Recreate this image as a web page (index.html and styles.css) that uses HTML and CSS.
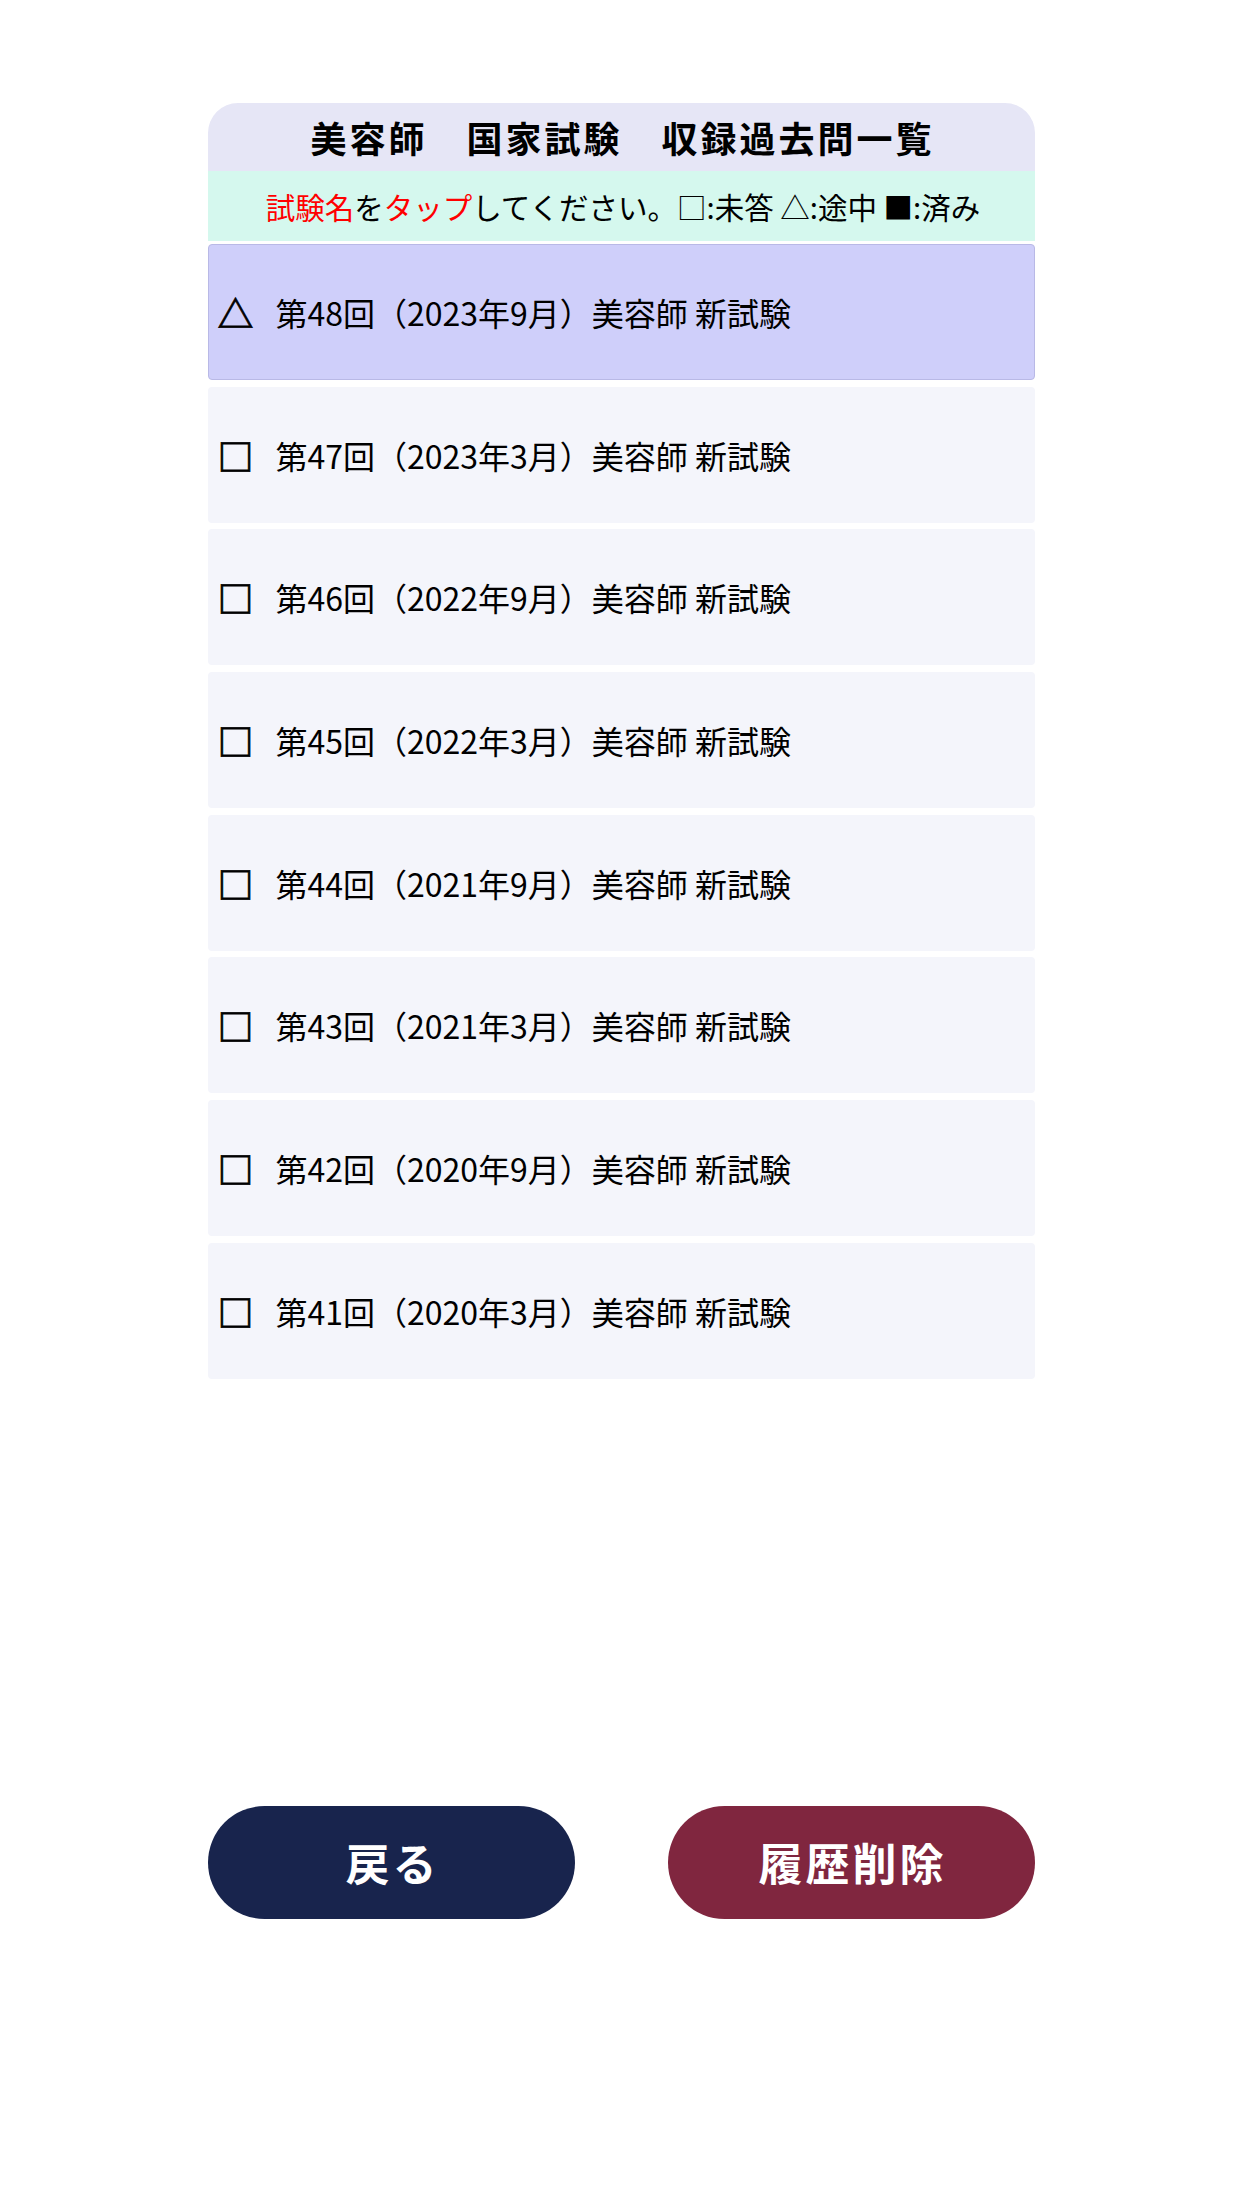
FILE: index.html
```html
<!DOCTYPE html>
<html lang="ja">

<head>
    <meta charset="utf-8">
    <meta name="viewport" content="width=device-width, initial-scale=1.0">
    <title>美容師 国家試験 収録過去問一覧</title>
    <link rel="stylesheet" href="styles.css">
</head>

<body>

    <div id="wrap">
        <h1 class="title">美容師　国家試験　収録過去問一覧</h1>
        <p class="hint"><span class="red">試験名</span>を<span class="red">タップ</span>してください。□:未答 △:途中 ■:済み</p>

        <ul class="exams">
            <li class="exam current"><span class="mark">△</span>第48回（2023年9月）美容師 新試験</li>
            <li class="exam"><span class="mark">□</span>第47回（2023年3月）美容師 新試験</li>
            <li class="exam"><span class="mark">□</span>第46回（2022年9月）美容師 新試験</li>
            <li class="exam"><span class="mark">□</span>第45回（2022年3月）美容師 新試験</li>
            <li class="exam"><span class="mark">□</span>第44回（2021年9月）美容師 新試験</li>
            <li class="exam"><span class="mark">□</span>第43回（2021年3月）美容師 新試験</li>
            <li class="exam"><span class="mark">□</span>第42回（2020年9月）美容師 新試験</li>
            <li class="exam"><span class="mark">□</span>第41回（2020年3月）美容師 新試験</li>
        </ul>

        <div class="buttons">
            <button class="btn back">戻る</button>
            <button class="btn reset">履歴削除</button>
        </div>
    </div>

</body>

</html>
```

FILE: styles.css
```css
body {
    margin: 0;
    background: #fff;
    font-family: "Noto Sans CJK JP", "Noto Sans", sans-serif;
    color: #000;
}

#wrap {
    width: 827px;
    margin: 103px auto 0;
}

.title {
    margin: 0;
    height: 68px;
    line-height: 68px;
    background: #e6e6f6;
    border-radius: 30px 30px 0 0;
    text-align: center;
    font-size: 36px;
    font-weight: bold;
    letter-spacing: 3px;
    text-indent: 3px;
}

.hint {
    margin: 0;
    height: 70px;
    line-height: 70px;
    background: #d5f8ee;
    text-align: center;
    font-size: 29.5px;
    text-indent: 4px;
}

.red {
    color: #ff0000;
}

.exams {
    list-style: none;
    margin: 3px 0 0;
    padding: 0;
    display: flex;
    flex-direction: column;
    gap: 6.7px;
}

.exam {
    height: 136px;
    display: flex;
    align-items: center;
    padding-left: 10px;
    background: #f4f5fb;
    border-radius: 4px;
    font-size: 32px;
    box-sizing: border-box;
}

.exam.current {
    background: #cfcffa;
    border: 1px solid #b9b9e6;
    padding-left: 9px;
}

.mark {
    width: 58px;
    font-size: 36px;
    font-weight: bold;
    -webkit-text-stroke: 0.8px #000;
}

.buttons {
    margin-top: 427px;
    display: flex;
    justify-content: space-between;
}

.btn {
    width: 367px;
    height: 113px;
    border: none;
    border-radius: 57px;
    color: #fff;
    font-family: "Noto Sans CJK JP", sans-serif;
    font-size: 44px;
    font-weight: bold;
    letter-spacing: 3px;
    text-indent: 3px;
}

.back {
    background: #18244d;
}

.reset {
    background: #80263f;
}
```
